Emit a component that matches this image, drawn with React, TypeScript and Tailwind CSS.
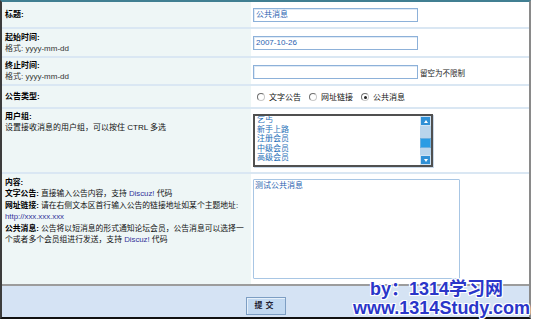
import React from 'react';

const font = "font-['Liberation_Sans','Noto_Sans_CJK_SC',sans-serif]";

const Row = ({ className, leftClass, label, children }: { className: string; leftClass: string; label: React.ReactNode; children: React.ReactNode }) => (
  <div className={`flex ${className}`}>
    <div className={`w-[249px] shrink-0 bg-[#eef6f6] pl-[3px] flex flex-col ${leftClass}`}>{label}</div>
    <div className="flex-1 flex items-center pl-[2px] bg-white">{children}</div>
  </div>
);

const TextBox = ({ value }: { value?: string }) => (
  <div className="w-[165px] h-[14px] border border-[#8db1d9] bg-white pl-[2px] text-[8px] leading-[12px] text-[#2a5fb0] shadow-[inset_1px_1px_0_#dfeaf6]">
    {value}
  </div>
);

const Radio = ({ checked }: { checked?: boolean }) => (
  <span className="w-[8px] h-[8px] rounded-full border border-[#6f6f6f] border-r-[#c8c8c8] border-b-[#c8c8c8] bg-white flex items-center justify-center">
    {checked && <span className="w-[3px] h-[3px] rounded-full bg-[#222]" />}
  </span>
);

const groups = ['乞丐', '新手上路', '注册会员', '中级会员', '高级会员'];

export default function App() {
  return (
    <div className={`relative w-[534px] h-[319px] bg-white overflow-hidden ${font}`}>
      <div className="w-[531px] h-[319px] border-t-2 border-l-2 border-r-2 border-b-2 border-t-[#417f92] border-l-[#3c3c3c] border-r-[#8a8a8a] border-b-[#111] flex flex-col">
        <div className="border-b-2 border-[#9c9c9c]">
          <Row className="h-[27px] border-b-2 border-[#dae7f3]" leftClass="justify-center" label={<b className="text-[8px] leading-[11px] text-black">标题:</b>}>
            <TextBox value="公共消息" />
          </Row>
          <Row
            className="h-[29px] border-b-2 border-[#dae7f3]"
            leftClass="justify-center"
            label={
              <>
                <b className="text-[8px] leading-[11px] text-black">起始时间:</b>
                <span className="text-[8px] leading-[11px] text-[#333]">格式: yyyy-mm-dd</span>
              </>
            }
          >
            <TextBox value="2007-10-26" />
          </Row>
          <Row
            className="h-[28px] border-b-2 border-[#dae7f3]"
            leftClass="justify-center"
            label={
              <>
                <b className="text-[8px] leading-[11px] text-black">终止时间:</b>
                <span className="text-[8px] leading-[11px] text-[#333]">格式: yyyy-mm-dd</span>
              </>
            }
          >
            <div className="flex items-end gap-[2px] pt-[1px]">
              <TextBox />
              <span className="text-[7.5px] leading-[10px] text-[#222]">留空为不限制</span>
            </div>
          </Row>
          <Row className="h-[23px] border-b-2 border-[#dae7f3]" leftClass="justify-center" label={<b className="text-[8px] leading-[11px] text-black">公告类型:</b>}>
            <div className="flex items-center pl-[4px] pt-[1px] text-[8px] leading-[11px] text-[#111]">
              <Radio />
              <span className="ml-[4px] mr-[8px]">文字公告</span>
              <Radio />
              <span className="ml-[4px] mr-[8px]">网址链接</span>
              <Radio checked />
              <span className="ml-[4px]">公共消息</span>
            </div>
          </Row>
          <Row
            className="h-[65px] border-b-2 border-[#dae7f3]"
            leftClass="justify-start pt-[2px]"
            label={
              <>
                <b className="text-[8px] leading-[11px] text-black">用户组:</b>
                <span className="text-[8px] leading-[11px] text-[#111]">设置接收消息的用户组，可以按住 CTRL 多选</span>
              </>
            }
          >
            <div className="w-[180px] h-[53px] border-2 border-[#505050] shadow-[1px_1px_0_#c9d9ea] bg-white flex">
              <div className="flex-1 overflow-hidden pl-[2px] text-[8px] leading-[9.6px] text-[#1f6fb8]">
                <div className="-mt-[1px]">
                  {groups.map((g) => (
                    <div key={g}>{g}</div>
                  ))}
                </div>
              </div>
              <div className="w-[11px] flex flex-col bg-[#b9d5ec]">
                <div className="h-[10px] bg-[#2f90d6] border border-[#cfe3f4] flex items-center justify-center">
                  <span className="w-0 h-0 border-l-[2.5px] border-r-[2.5px] border-b-[3px] border-l-transparent border-r-transparent border-b-white" />
                </div>
                <div className="h-[12px]" />
                <div className="h-[10px] bg-[#2a9ce4] border border-[#6cb0e0]" />
                <div className="flex-1" />
                <div className="h-[10px] bg-[#2f90d6] border border-[#cfe3f4] flex items-center justify-center">
                  <span className="w-0 h-0 border-l-[2.5px] border-r-[2.5px] border-t-[3px] border-l-transparent border-r-transparent border-t-white" />
                </div>
              </div>
            </div>
          </Row>
          <Row
            className="h-[110px]"
            leftClass="justify-start pt-[3px]"
            label={
              <div className="text-[7.8px] leading-[11.4px] text-[#111] whitespace-nowrap">
                <b className="text-black">内容:</b>
                <br />
                <b className="text-black">文字公告:</b> 直接输入公告内容，支持 <span className="text-[#333399]">Discuz!</span> 代码
                <br />
                <b className="text-black">网址链接:</b> 请在右侧文本区首行输入公告的链接地址如某个主题地址:
                <br />
                <span className="text-[#333399]">http://xxx.xxx.xxx</span>
                <br />
                <b className="text-black">公共消息:</b> 公告将以短消息的形式通知论坛会员，公告消息可以选择一
                <br />
                个或者多个会员组进行发送，支持 <span className="text-[#333399]">Discuz!</span> 代码
              </div>
            }
          >
            <div className="w-[207px] h-[100px] border border-[#a8c6e4] rounded-[1px] bg-white pl-[1px] text-[8px] leading-[11px] text-[#2a5fb0]">
              测试公共消息
            </div>
          </Row>
        </div>
        <div className="flex-1 bg-[#d5e3f4] flex justify-center pt-[11px]">
          <div className="w-[40px] h-[18px] bg-[#c2d9f1] border border-[#7d9ec3] shadow-[inset_1px_1px_0_#e6f0fa] flex items-center justify-center text-[8px] font-bold text-[#223] tracking-[3px]">
            提交
          </div>
        </div>
      </div>
      <div className="absolute left-[353px] top-[280px] font-bold text-[18px] leading-[19px] text-[#2a36c9] [text-shadow:1px_0_#fff,-1px_0_#fff,0_1px_#fff,0_-1px_#fff,1px_1px_#fff,-1px_-1px_#fff,1px_-1px_#fff,-1px_1px_#fff] whitespace-nowrap">
        <div className="pl-[17px]">by：1314学习网</div>
        <div>www.1314Study.com</div>
      </div>
    </div>
  );
}
